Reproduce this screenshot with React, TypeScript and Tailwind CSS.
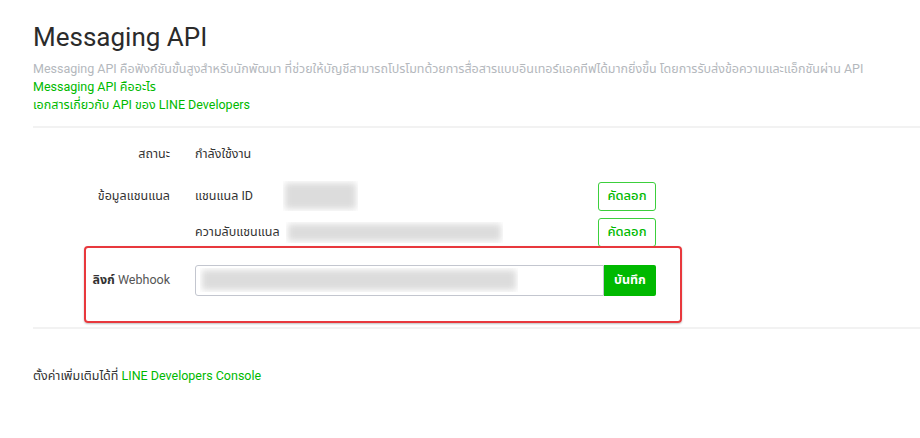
import React from "react";

const font = { fontFamily: 'Roboto, "Noto Sans", "Noto Sans Thai", Tahoma, sans-serif' };

function Blur({ className }: { className: string }) {
  return (
    <div className={"relative overflow-hidden " + className}>
      <div className="absolute inset-[2px] bg-[#dcdcdc] blur-[3px]" />
    </div>
  );
}

export default function App() {
  return (
    <div className="w-[920px] h-[438px] bg-white overflow-hidden text-[#333]" style={font}>
      <div className="pl-[33px] pt-[22px]">
        <h1 className="text-[26px] leading-[30px] text-[#2b2b2b] font-normal">Messaging API</h1>
        <p className="mt-[8px] text-[12.5px] leading-[18px] text-[#b4b8bd] whitespace-nowrap">
          Messaging API คือฟังก์ชันขั้นสูงสำหรับนักพัฒนา ที่ช่วยให้บัญชีสามารถโปรโมทด้วยการสื่อสารแบบอินเทอร์แอคทีฟได้มากยิ่งขึ้น โดยการรับส่งข้อความและแอ็กชันผ่าน API
        </p>
        <a className="block text-[12.5px] leading-[18px] text-[#00b900]">Messaging API คืออะไร</a>
        <a className="block text-[12.5px] leading-[18px] text-[#00b900]">เอกสารเกี่ยวกับ API ของ LINE Developers</a>
        <div className="mt-[12px] h-[2px] bg-[#f2f2f2]" />

        <div className="text-[12.5px]">
          <div className="grid grid-cols-[137px_461px] gap-x-[25px] h-[52px] items-center">
            <div className="text-right">สถานะ</div>
            <div>กำลังใช้งาน</div>
          </div>
          <div className="grid grid-cols-[137px_461px] gap-x-[25px] h-[32px] items-center">
            <div className="text-right">ข้อมูลแชนแนล</div>
            <div className="flex items-center">
              <span className="w-[88px]">แชนแนล ID</span>
              <Blur className="w-[75px] h-[30px]" />
              <button className="ml-auto w-[58px] h-[29px] border border-[#3ccf3c] rounded-[3px] text-[#00b900] text-[13px] font-medium">คัดลอก</button>
            </div>
          </div>
          <div className="grid grid-cols-[137px_461px] gap-x-[25px] h-[36px] items-center mt-[2px]">
            <div />
            <div className="flex items-center">
              <span className="w-[91px]">ความลับแชนแนล</span>
              <Blur className="w-[217px] h-[21px]" />
              <button className="ml-auto w-[58px] h-[29px] border border-[#3ccf3c] rounded-[3px] text-[#00b900] text-[13px] font-medium">คัดลอก</button>
            </div>
          </div>
          <div className="relative grid grid-cols-[137px_461px] gap-x-[25px] h-[60px] items-center">
            <div className="absolute left-[51px] top-[-4px] w-[598px] h-[77px] border-[2px] border-[#e8383d] rounded-[4px] shadow-[0_1px_2px_rgba(0,0,0,0.25)]" />
            <div className="text-right text-[#555]"><span className="font-bold text-[#333]">ลิงก์</span> Webhook</div>
            <div className="flex items-center">
              <div className="w-[409px] h-[31px] border-[1.5px] border-[#c3c6cf] rounded-l-[3px] flex items-center px-[4px]">
                <Blur className="w-[318px] h-[24px]" />
              </div>
              <button className="w-[52px] h-[31px] bg-[#00b900] text-white text-[12.5px] font-bold rounded-r-[2px]">บันทึก</button>
            </div>
          </div>
        </div>
        <div className="mt-[17px] h-[2px] bg-[#f2f2f2]" />
        <div className="mt-[38px] text-[12.5px] leading-[18px] text-[#333]">
          ตั้งค่าเพิ่มเติมได้ที่ <span className="text-[#00b900]">LINE Developers Console</span>
        </div>
      </div>
    </div>
  );
}
